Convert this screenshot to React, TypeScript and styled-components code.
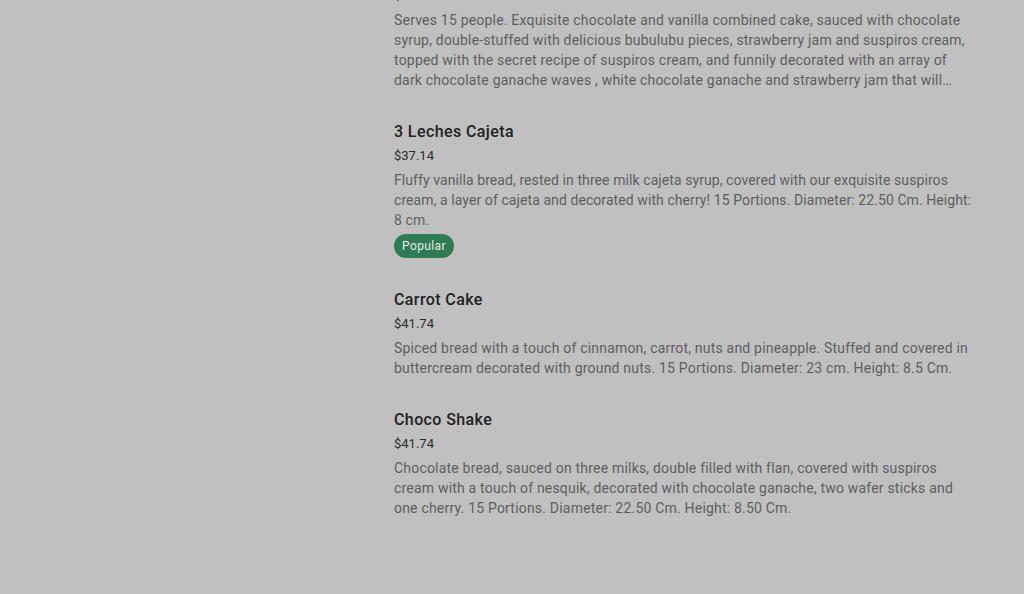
import React from "react";
import styled, { createGlobalStyle } from "styled-components";

const Global = createGlobalStyle`
  html, body { margin: 0; padding: 0; background: #c0c0c0; }
  body { font-family: Roboto, "Liberation Sans", sans-serif; overflow: hidden; }
`;

const Page = styled.div`
  display: grid;
  grid-template-columns: 394px 584px 1fr;
  height: 594px;
  overflow: hidden;
  background: #c0c0c0;
`;

const Side = styled.aside``;

const List = styled.ul`
  list-style: none;
  margin: -40px 0 0;
  padding: 0;
  display: flex;
  flex-direction: column;
  gap: 30px;
`;

const Item = styled.li`
  display: flex;
  flex-direction: column;
  align-items: flex-start;
`;

const Title = styled.h3`
  margin: 0;
  font-size: 16px;
  line-height: 24px;
  font-weight: 500;
  letter-spacing: 0.4px;
  color: #222222;
`;

const Price = styled.div`
  margin-top: 2px;
  font-size: 13px;
  line-height: 20px;
  color: #2c2c2c;
`;

const Desc = styled.p<{ $clamp?: number; $spacing?: number }>`
  margin: 4px 0 0;
  font-size: 14px;
  line-height: 20px;
  letter-spacing: ${(p) => p.$spacing ?? 0.2}px;
  color: #5e5e5e;
  ${(p) =>
    p.$clamp
      ? `display: -webkit-box; -webkit-line-clamp: ${p.$clamp}; -webkit-box-orient: vertical; overflow: hidden;`
      : ""}
`;

const Badge = styled.span`
  margin-top: 4px;
  display: inline-flex;
  align-items: center;
  height: 24px;
  padding: 0 8px;
  border-radius: 12px;
  background: #2f7b56;
  color: #e3ece7;
  font-size: 12px;
  line-height: 16px;
  letter-spacing: 0.4px;
`;

type MenuItem = {
  title: string;
  price: string;
  desc: string;
  clamp?: number;
  spacing?: number;
  popular?: boolean;
};

const items: MenuItem[] = [
  {
    title: "Bubulubu Cake",
    price: "$41.74",
    desc:
      "Serves 15 people. Exquisite chocolate and vanilla combined cake, sauced with chocolate syrup, double-stuffed with delicious bubulubu pieces, strawberry jam and suspiros cream, topped with the secret recipe of suspiros cream, and funnily decorated with an array of dark chocolate ganache waves , white chocolate ganache and strawberry jam that will make every bite a delight for the whole family.",
    clamp: 4,
  },
  {
    title: "3 Leches Cajeta",
    price: "$37.14",
    desc:
      "Fluffy vanilla bread, rested in three milk cajeta syrup, covered with our exquisite suspiros cream, a layer of cajeta and decorated with cherry! 15 Portions. Diameter: 22.50 Cm. Height: 8 cm.",
    spacing: 0.08,
    popular: true,
  },
  {
    title: "Carrot Cake",
    price: "$41.74",
    desc:
      "Spiced bread with a touch of cinnamon, carrot, nuts and pineapple. Stuffed and covered in buttercream decorated with ground nuts. 15 Portions. Diameter: 23 cm. Height: 8.5 Cm.",
  },
  {
    title: "Choco Shake",
    price: "$41.74",
    desc:
      "Chocolate bread, sauced on three milks, double filled with flan, covered with suspiros cream with a touch of nesquik, decorated with chocolate ganache, two wafer sticks and one cherry. 15 Portions. Diameter: 22.50 Cm. Height: 8.50 Cm.",
  },
];

export default function App() {
  return (
    <>
      <Global />
      <Page>
        <Side />
        <List>
          {items.map((it) => (
            <Item key={it.title}>
              <Title>{it.title}</Title>
              <Price>{it.price}</Price>
              <Desc $clamp={it.clamp} $spacing={it.spacing}>
                {it.desc}
              </Desc>
              {it.popular && <Badge>Popular</Badge>}
            </Item>
          ))}
        </List>
        <Side />
      </Page>
    </>
  );
}
